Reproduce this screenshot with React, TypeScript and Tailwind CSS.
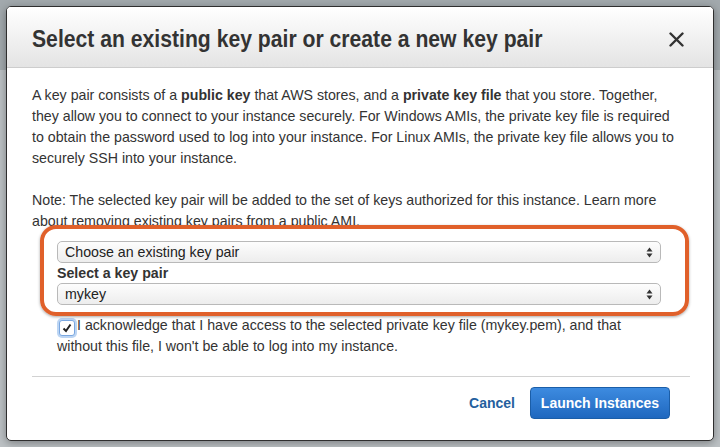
import React from "react";

const Arrows: React.FC = () => (
  <svg width="7" height="11" viewBox="0 0 7 11" className="shrink-0">
    <path d="M3.5 0.5 L6.5 4.5 L0.5 4.5 Z" fill="#333" />
    <path d="M3.5 10.5 L6.5 6.5 L0.5 6.5 Z" fill="#333" />
  </svg>
);

const FakeSelect: React.FC<{ value: string }> = ({ value }) => (
  <div className="flex h-[22px] w-[604px] items-center justify-between rounded-[5px] border border-[#b9b9b9] bg-gradient-to-b from-[#fdfdfd] to-[#ededed] pl-[7px] pr-[7px] text-[14.2px] text-[#222]">
    <span>{value}</span>
    <Arrows />
  </div>
);

const App: React.FC = () => {
  return (
    <div
      className="h-[447px] w-[720px] overflow-hidden bg-[linear-gradient(#a2a9ad_0_70px,#bcc1c4_70px)] pl-[6px] pt-[6px] text-[#333]"
      style={{ fontFamily: '"Liberation Sans", Arial, Helvetica, sans-serif' }}
    >
      {/* Modal */}
      <div className="relative flex h-[435px] w-[708px] flex-col overflow-hidden rounded-[5px] border border-[#2e2e2e] bg-white shadow-[0_2px_8px_rgba(0,0,0,0.35)]">
        {/* Header */}
        <div className="flex h-[61px] shrink-0 items-center justify-between border-b border-[#cdcdcd] bg-gradient-to-b from-white to-[#e4e4e4] pl-[25px] pr-[29px] pt-[4px]">
          <h1 className="origin-left scale-x-[0.92] whitespace-nowrap text-[23px] font-bold leading-none text-[#333]">
            Select an existing key pair or create a new key pair
          </h1>
          <svg width="15" height="15" viewBox="0 0 15 15">
            <path d="M1.5 1.5 L13.5 13.5 M13.5 1.5 L1.5 13.5" stroke="#333" strokeWidth="2.4" strokeLinecap="round" />
          </svg>
        </div>

        {/* Body */}
        <div className="flex flex-1 flex-col pl-[25px] pr-[20px] pt-[17px] text-[14.2px] leading-[21px]">
          <p className="whitespace-nowrap">
            A key pair consists of a <b>public key</b> that AWS stores, and a <b>private key file</b> that you store. Together,
            <br />
            they allow you to connect to your instance securely. For Windows AMIs, the private key file is required
            <br />
            to obtain the password used to log into your instance. For Linux AMIs, the private key file allows you to
            <br />
            securely SSH into your instance.
          </p>
          <p className="mt-[21px] whitespace-nowrap">
            Note: The selected key pair will be added to the set of keys authorized for this instance. Learn more
            <br />
            about removing existing key pairs from a public AMI.
          </p>

          <div className="ml-[25px] mt-[9px] flex flex-col">
            <FakeSelect value="Choose an existing key pair" />
            <div className="flex h-[20px] items-center font-bold">Select a key pair</div>
            <FakeSelect value="mykey" />
          </div>

          <div className="ml-[25px] mt-[10px] whitespace-nowrap">
            <span className="ml-[2px] mr-[2px] inline-flex h-[16px] w-[16px] translate-y-[3px] items-center justify-center rounded-[3px] border border-[#7aa7e0] bg-white shadow-[0_0_0_2px_#bcd5f3]">
              <svg width="10" height="10" viewBox="0 0 10 10">
                <path d="M1.5 5.5 L4 8 L8.5 1.5" stroke="#222" strokeWidth="2" fill="none" />
              </svg>
            </span>
            I acknowledge that I have access to the selected private key file (mykey.pem), and that
            <br />
            without this file, I won't be able to log into my instance.
          </div>

          <div className="mr-[3px] mt-[19px] h-px shrink-0 bg-[#d2d2d2]" />

          <div className="mt-[10px] flex items-center justify-end pr-[23px]">
            <button className="mr-[15px] text-[14px] font-bold text-[#245f9e]">Cancel</button>
            <button className="h-[32px] w-[140px] rounded-[4px] border border-[#1b5ea8] bg-gradient-to-b from-[#3d8be0] to-[#1f68bf] text-[14px] font-bold text-white">
              Launch Instances
            </button>
          </div>
        </div>

        {/* Orange highlight annotation */}
        <div className="pointer-events-none absolute left-[33px] top-[218px] h-[91px] w-[649px] rounded-[16px] border-[4px] border-[#e0602a] shadow-[0_1px_3px_rgba(0,0,0,0.35)]" />
      </div>
    </div>
  );
};

export default App;
